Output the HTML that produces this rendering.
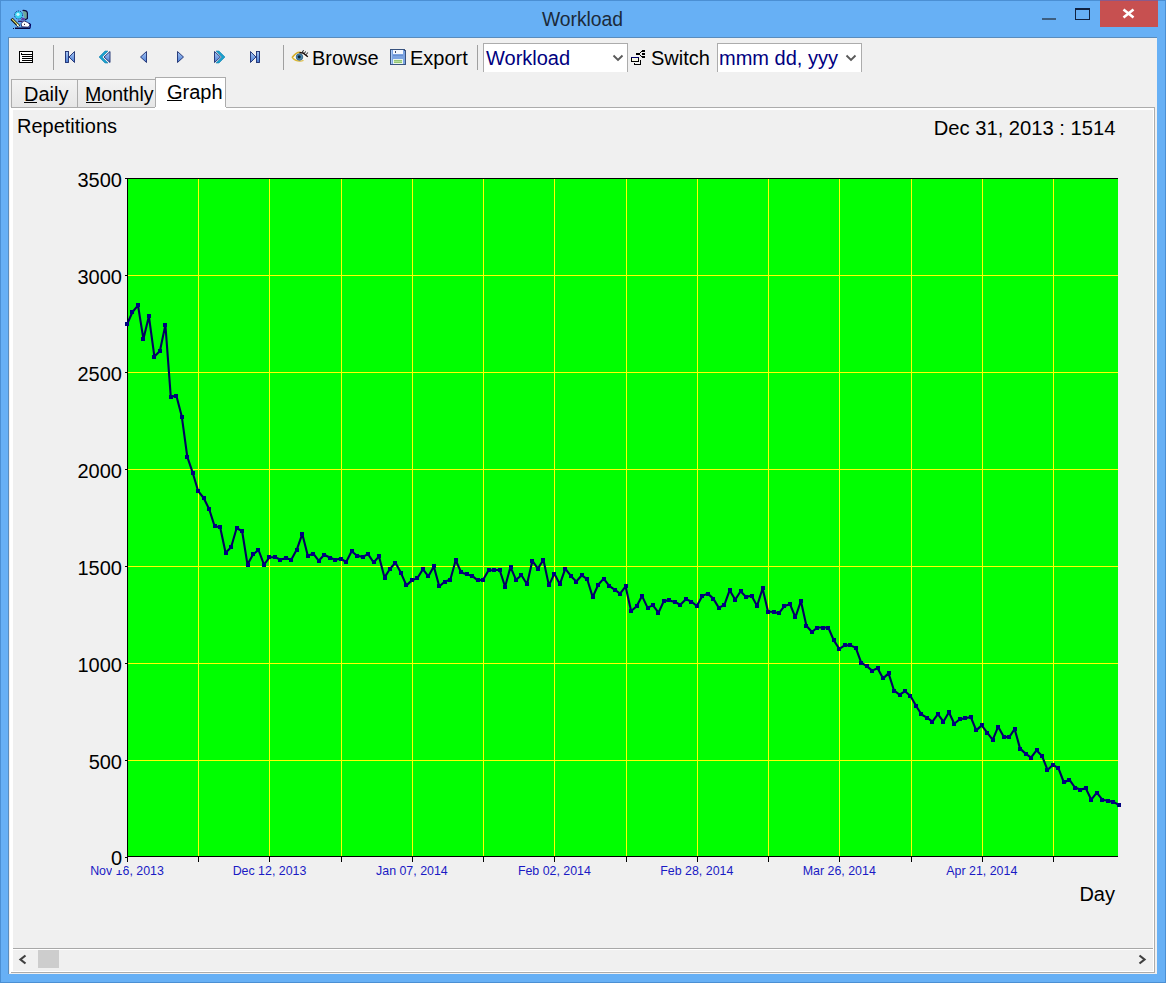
<!DOCTYPE html>
<html><head><meta charset="utf-8"><title>Workload</title>
<style>
html,body{margin:0;padding:0;width:1166px;height:983px;overflow:hidden;background:#67b0f5;}
svg{position:absolute;left:0;top:0;display:block;}
text{font-family:"Liberation Sans",sans-serif;}
</style></head><body>
<svg width="1166" height="983" viewBox="0 0 1166 983">
<!-- window frame -->
<rect x="0" y="0" width="1166" height="983" fill="#67b0f5"/>
<rect x="0.5" y="0.5" width="1165" height="982" fill="none" stroke="#4b8fd3" shape-rendering="crispEdges"/>
<!-- title -->
<text x="582.5" y="26" font-size="19.3" fill="#1b2a3a" text-anchor="middle">Workload</text>
<!-- app icon -->
<g>
  <circle cx="18.5" cy="15" r="4" fill="#38d0f0" stroke="#1a1a70" stroke-width="1" stroke-dasharray="1 1"/>
  <circle cx="18" cy="14.3" r="1.6" fill="#c8f8ff"/>
  <path d="M22.5 10.5 Q27 10.2 27.4 13 L27.4 18.5 L25 20" fill="#70a898" stroke="#0a0a40" stroke-width="1.2"/>
  <path d="M22 17.5 L25.5 18.5 L24 20.5 L21 20 Z" fill="#6040a0"/>
  <path d="M18 21.3 L22.5 21.3" stroke="#301060" stroke-width="1.2"/>
  <path d="M11.5 18.8 L19 26.3" stroke="#000000" stroke-width="3"/>
  <path d="M12 19 L18.5 25.5" stroke="#d8d870" stroke-width="1.3"/>
  <path d="M17 24.5 L18.8 26.4" stroke="#ffffff" stroke-width="1.3"/>
  <path d="M21 23.5 L24 20.8 L27.6 22.4 L30.5 24.5 L28.2 27.2 L21.8 26.8 Z" fill="#ffffff" stroke="#0a0a50" stroke-width="0.8"/>
  <rect x="24" y="23.8" width="1" height="1" fill="#000"/>
  <rect x="15" y="27.5" width="15" height="1.5" fill="#050540"/>
  <rect x="13" y="28" width="1" height="1" fill="#050540"/>
  <path d="M29 23.2 L30.5 24.5 L30 28.5" fill="none" stroke="#050560" stroke-width="1.2"/>
</g>
<!-- min / max / close -->
<rect x="1042" y="18" width="14" height="2" fill="#3d5e80" shape-rendering="crispEdges"/>
<rect x="1075.5" y="8.5" width="14" height="11" fill="none" stroke="#102240" shape-rendering="crispEdges"/>
<rect x="1075" y="8" width="15" height="2" fill="#102240" shape-rendering="crispEdges"/>
<rect x="1100" y="0" width="58" height="27" fill="#c75050" shape-rendering="crispEdges"/>
<rect x="1100" y="0" width="58" height="1" fill="#8a5a8a" shape-rendering="crispEdges"/>
<path d="M1123.5 9.5 L1133.5 17.5 M1133.5 9.5 L1123.5 17.5" stroke="#ffffff" stroke-width="2.6"/>

<!-- client area -->
<rect x="8" y="37" width="1149" height="937" fill="#f0f0f0" shape-rendering="crispEdges"/>
<rect x="8" y="37" width="1" height="937" fill="#5a8cbc" shape-rendering="crispEdges"/>
<rect x="8" y="37" width="1149" height="1" fill="#5a8cbc" shape-rendering="crispEdges"/>

<!-- toolbar -->
<g shape-rendering="crispEdges">
  <rect x="19" y="51" width="14" height="12" fill="#000"/>
  <rect x="20" y="52" width="12" height="10" fill="#fff"/>
  <rect x="22" y="54" width="10" height="1" fill="#000"/>
  <rect x="22" y="56" width="10" height="1" fill="#000"/>
  <rect x="22" y="58" width="10" height="1" fill="#000"/>
  <rect x="22" y="60" width="10" height="1" fill="#000"/>
  <rect x="21" y="53" width="1" height="2" fill="#000"/>
  <rect x="53" y="45" width="1" height="25" fill="#a0a0a0"/>
  <rect x="283" y="45" width="1" height="25" fill="#a0a0a0"/>
  <rect x="477" y="45" width="1" height="25" fill="#a0a0a0"/>
</g>
<defs>
  <linearGradient id="nb" x1="0" y1="0" x2="0" y2="1">
    <stop offset="0" stop-color="#a8c8f4"/><stop offset="1" stop-color="#4a7cd4"/>
  </linearGradient>
</defs>
<g stroke="#1a2c6e" stroke-width="0.9" fill="url(#nb)" stroke-linejoin="miter">
  <!-- |< -->
  <rect x="65.5" y="51.5" width="3" height="11"/>
  <path d="M74.5 51.5 L69 57 L74.5 62.5 Z"/>
  <!-- << -->
  <path d="M108 51 L105 51 L99 57 L105 63 L108 63 L102 57 Z" fill="#1aa0cc" stroke="#1482b0" stroke-width="0.6"/>
  <path d="M110 51.5 L104 57 L110 62.5 Z"/>
  <!-- < -->
  <path d="M146.5 51.5 L140.5 57 L146.5 62.5 Z"/>
  <!-- > -->
  <path d="M177.5 51.5 L183.5 57 L177.5 62.5 Z"/>
  <!-- >> -->
  <path d="M214.5 51.5 L220.5 57 L214.5 62.5 Z"/>
  <path d="M216 51 L219 51 L225 57 L219 63 L216 63 L222 57 Z" fill="#1aa0cc" stroke="#1482b0" stroke-width="0.6"/>
  <!-- >| -->
  <path d="M250.5 51.5 L256 57 L250.5 62.5 Z"/>
  <rect x="256.5" y="51.5" width="3" height="11"/>
</g>
<!-- eye icon -->
<g transform="translate(288,46)">
  <path d="M4 11.5 Q9 5.2 14 6.2 Q18 7 20 10.5 Q15 15.8 10 15.3 Q6 14.8 4 11.5 Z" fill="#fbfbf4"/>
  <path d="M4 11.8 Q8.5 5.6 12.5 6.3" fill="none" stroke="#d4ac28" stroke-width="1.7"/>
  <path d="M4.5 12 Q9 16.4 15.5 14.5" fill="none" stroke="#dcb830" stroke-width="1.3"/>
  <circle cx="11.5" cy="11" r="3.3" fill="#4a88b0" stroke="#2f5a80" stroke-width="0.8"/>
  <circle cx="11.2" cy="10.8" r="1.6" fill="#0c2430"/>
  <path d="M11.5 6.6 L15 7 L19.8 10.8" fill="none" stroke="#150808" stroke-width="1.4"/>
  <path d="M15.5 4.2 L14.2 6.5 M17.5 5.5 L16.4 7.5 M19.6 6.5 L18.4 8.6" stroke="#101010" stroke-width="1"/>
</g>
<text x="312" y="65" font-size="20" fill="#000">Browse</text>
<!-- floppy icon -->
<g transform="translate(390,49)" shape-rendering="crispEdges">
  <path d="M0.5 0.5 H14 L15.5 2 V15.5 H0.5 Z" fill="#7ca4e2" stroke="#38527e"/>
  <rect x="1" y="1" width="1" height="14" fill="#a8c8f4"/>
  <rect x="3" y="1" width="10" height="4" fill="#f4f8ff"/>
  <rect x="5" y="2" width="1" height="2" fill="#3c4660"/>
  <rect x="3" y="6" width="10" height="1" fill="#6890d0"/>
  <rect x="3" y="10" width="10" height="5" fill="#eaf6ea"/>
  <rect x="4" y="11" width="8" height="3" fill="#94c474"/>
  <rect x="4" y="12" width="8" height="1" fill="#b4dc9c"/>
</g>
<text x="410" y="65" font-size="20" fill="#000">Export</text>
<!-- combo 1 -->
<path d="M483.5 72 V43.5 H627.5 V72" fill="#ffffff" stroke="#acacac" shape-rendering="crispEdges"/>
<text x="486" y="65" font-size="20" fill="#000080">Workload</text>
<path d="M613.5 55.5 L618 60 L622.5 55.5" fill="none" stroke="#5a5a5a" stroke-width="1.9"/>
<!-- switch icon -->
<g shape-rendering="crispEdges">
  <rect x="631" y="57" width="8" height="5" fill="#000"/>
  <rect x="631" y="57" width="8" height="1" fill="#00006a"/>
  <rect x="632" y="58" width="6" height="3" fill="#f6f6e6"/>
  <rect x="634" y="63" width="1" height="2" fill="#000"/>
  <rect x="634" y="64" width="7" height="1" fill="#000"/>
  <rect x="640" y="60" width="1" height="5" fill="#000"/>
  <rect x="636" y="53" width="4" height="2" fill="#000"/>
  <rect x="642" y="50" width="3" height="2" fill="#000"/>
  <rect x="642" y="53" width="3" height="2" fill="#000"/>
  <rect x="642" y="56" width="3" height="2" fill="#000"/>
  <rect x="641" y="51" width="1" height="1" fill="#000"/>
  <rect x="640" y="52" width="1" height="1" fill="#000"/>
  <rect x="640" y="55" width="1" height="1" fill="#000"/>
  <rect x="641" y="56" width="1" height="1" fill="#000"/>
</g>
<text x="651" y="65" font-size="20" fill="#000">Switch</text>
<!-- combo 2 -->
<path d="M717.5 72 V43.5 H861.5 V72" fill="#ffffff" stroke="#acacac" shape-rendering="crispEdges"/>
<text x="719" y="65" font-size="20" fill="#000080">mmm dd, yyy</text>
<path d="M846.5 55.5 L851 60 L855.5 55.5" fill="none" stroke="#5a5a5a" stroke-width="1.9"/>
<!-- toolbar bottom clip -->
<rect x="9" y="72" width="1148" height="5" fill="#f0f0f0" shape-rendering="crispEdges"/>

<!-- tab panel -->
<g shape-rendering="crispEdges">
  <rect x="10" y="107" width="1145" height="866" fill="#ffffff"/>
  <rect x="10" y="107" width="1145" height="1" fill="#acacac"/>
  <rect x="1154" y="107" width="1" height="866" fill="#acacac"/>
  <rect x="10" y="972" width="1145" height="1" fill="#acacac"/>
  <rect x="10" y="107" width="1" height="866" fill="#ffffff"/>
  <rect x="13" y="110" width="1140" height="861" fill="#f0f0f0"/>
</g>
<!-- tabs -->
<defs>
  <linearGradient id="tg" x1="0" y1="0" x2="0" y2="1">
    <stop offset="0" stop-color="#f3f3f3"/><stop offset="1" stop-color="#e6e6e6"/>
  </linearGradient>
</defs>
<g shape-rendering="crispEdges">
  <rect x="11.5" y="79.5" width="66" height="28" fill="url(#tg)" stroke="#acacac"/>
  <rect x="77.5" y="79.5" width="78" height="28" fill="url(#tg)" stroke="#acacac"/>
  <rect x="155.5" y="77.5" width="70" height="30" fill="#ffffff" stroke="#acacac"/>
  <rect x="155" y="107" width="71" height="3" fill="#ffffff"/>
</g>
<text x="24" y="101" font-size="20" fill="#000">Daily</text>
<rect x="24" y="102" width="13" height="1" fill="#000"/>
<text x="85" y="101" font-size="19.6" fill="#000">Monthly</text>
<rect x="86" y="102" width="16" height="1" fill="#000"/>
<text x="167" y="99" font-size="20" fill="#000">Graph</text>
<rect x="167" y="100" width="15" height="1" fill="#000"/>

<!-- chart titles -->
<text x="17" y="133" font-size="20" fill="#000">Repetitions</text>
<text x="1115.5" y="135" font-size="20.2" fill="#000" text-anchor="end">Dec 31, 2013 : 1514</text>
<text x="1115" y="901" font-size="20" fill="#000" text-anchor="end">Day</text>

<!-- chart -->
<rect x="127" y="178" width="991" height="679" fill="#00ff00" shape-rendering="crispEdges"/>
<g stroke="#ffff00" stroke-width="1" shape-rendering="crispEdges"><line x1="198.5" y1="178" x2="198.5" y2="857"/><line x1="269.5" y1="178" x2="269.5" y2="857"/><line x1="341.5" y1="178" x2="341.5" y2="857"/><line x1="412.5" y1="178" x2="412.5" y2="857"/><line x1="483.5" y1="178" x2="483.5" y2="857"/><line x1="554.5" y1="178" x2="554.5" y2="857"/><line x1="626.5" y1="178" x2="626.5" y2="857"/><line x1="697.5" y1="178" x2="697.5" y2="857"/><line x1="768.5" y1="178" x2="768.5" y2="857"/><line x1="839.5" y1="178" x2="839.5" y2="857"/><line x1="911.5" y1="178" x2="911.5" y2="857"/><line x1="982.5" y1="178" x2="982.5" y2="857"/><line x1="1053.5" y1="178" x2="1053.5" y2="857"/><line x1="127" y1="760.5" x2="1118" y2="760.5"/><line x1="127" y1="663.5" x2="1118" y2="663.5"/><line x1="127" y1="566.5" x2="1118" y2="566.5"/><line x1="127" y1="469.5" x2="1118" y2="469.5"/><line x1="127" y1="372.5" x2="1118" y2="372.5"/><line x1="127" y1="275.5" x2="1118" y2="275.5"/></g>
<g stroke="#000000" stroke-width="1" shape-rendering="crispEdges">
  <line x1="127.5" y1="178" x2="127.5" y2="858"/>
  <line x1="127" y1="178.5" x2="1118" y2="178.5"/>
  <line x1="127" y1="856.5" x2="1118" y2="856.5"/>
  <line x1="127.5" y1="857" x2="127.5" y2="862"/><line x1="198.5" y1="857" x2="198.5" y2="862"/><line x1="269.5" y1="857" x2="269.5" y2="862"/><line x1="341.5" y1="857" x2="341.5" y2="862"/><line x1="412.5" y1="857" x2="412.5" y2="862"/><line x1="483.5" y1="857" x2="483.5" y2="862"/><line x1="554.5" y1="857" x2="554.5" y2="862"/><line x1="626.5" y1="857" x2="626.5" y2="862"/><line x1="697.5" y1="857" x2="697.5" y2="862"/><line x1="768.5" y1="857" x2="768.5" y2="862"/><line x1="839.5" y1="857" x2="839.5" y2="862"/><line x1="911.5" y1="857" x2="911.5" y2="862"/><line x1="982.5" y1="857" x2="982.5" y2="862"/><line x1="1053.5" y1="857" x2="1053.5" y2="862"/><line x1="125" y1="857.5" x2="127" y2="857.5"/><line x1="125" y1="760.5" x2="127" y2="760.5"/><line x1="125" y1="663.5" x2="127" y2="663.5"/><line x1="125" y1="566.5" x2="127" y2="566.5"/><line x1="125" y1="469.5" x2="127" y2="469.5"/><line x1="125" y1="372.5" x2="127" y2="372.5"/><line x1="125" y1="275.5" x2="127" y2="275.5"/><line x1="125" y1="178.5" x2="127" y2="178.5"/>
</g>
<g font-size="12.4" fill="#1a1ac4" text-anchor="middle"><text x="127.0" y="875">Nov 16, 2013</text><text x="269.5" y="875">Dec 12, 2013</text><text x="411.9" y="875">Jan 07, 2014</text><text x="554.4" y="875">Feb 02, 2014</text><text x="696.8" y="875">Feb 28, 2014</text><text x="839.3" y="875">Mar 26, 2014</text><text x="981.8" y="875">Apr 21, 2014</text></g>
<rect x="112" y="848" width="12" height="22" fill="#f0f0f0"/>
<g font-size="20" fill="#000" text-anchor="end"><text x="122" y="865">0</text><text x="122" y="769">500</text><text x="122" y="672">1000</text><text x="122" y="575">1500</text><text x="122" y="478">2000</text><text x="122" y="381">2500</text><text x="122" y="284">3000</text><text x="122" y="187">3500</text></g>
<polyline points="127.0,324.3 132.5,312.0 138.0,305.4 143.4,338.9 148.9,316.3 154.4,356.6 159.9,351.0 165.4,324.9 170.8,397.0 176.3,395.5 181.8,416.6 187.3,456.8 192.7,472.7 198.2,491.2 203.7,498.0 209.2,509.2 214.7,526.5 220.1,527.0 225.6,552.8 231.1,547.2 236.6,528.2 242.1,531.0 247.5,564.6 253.0,554.5 258.5,550.0 264.0,564.6 269.5,557.3 274.9,557.3 280.4,559.5 285.9,558.4 291.4,559.5 296.8,549.6 302.3,533.9 307.8,555.8 313.3,553.6 318.8,560.8 324.2,554.7 329.7,557.5 335.2,559.7 340.7,558.6 346.2,562.0 351.6,551.3 357.1,555.8 362.6,556.9 368.1,554.1 373.6,562.5 379.0,556.4 384.5,577.6 390.0,568.7 395.5,562.8 400.9,572.8 406.4,585.4 411.9,580.4 417.4,578.1 422.9,569.2 428.3,576.4 433.8,566.4 439.3,586.5 444.8,581.5 450.3,579.8 455.7,560.2 461.2,572.5 466.7,574.2 472.2,575.9 477.7,580.4 483.1,579.8 488.6,570.3 494.1,570.3 499.6,569.7 505.1,586.7 510.5,566.9 516.0,579.8 521.5,575.3 527.0,584.3 532.4,560.8 537.9,568.6 543.4,559.7 548.9,585.4 554.4,573.6 559.8,584.3 565.3,568.6 570.8,575.9 576.3,581.5 581.8,575.3 587.2,579.2 592.7,597.1 598.2,584.7 603.7,578.6 609.2,585.8 614.6,589.7 620.1,593.6 625.6,586.4 631.1,611.0 636.5,606.5 642.0,595.9 647.5,607.6 653.0,605.4 658.5,612.7 663.9,600.9 669.4,600.4 674.9,602.0 680.4,604.8 685.9,599.2 691.3,601.5 696.8,606.0 702.3,595.9 707.8,593.6 713.3,598.6 718.7,607.6 724.2,605.3 729.7,590.2 735.2,599.7 740.6,591.3 746.1,596.9 751.6,595.8 757.1,605.9 762.6,588.5 768.0,611.5 773.5,612.0 779.0,613.2 784.5,605.9 790.0,604.2 795.4,617.3 800.9,601.0 806.4,625.8 811.9,632.0 817.4,627.5 822.8,627.5 828.3,627.5 833.8,640.4 839.3,648.8 844.7,645.4 850.2,645.4 855.7,647.6 861.2,662.7 866.7,666.1 872.1,670.6 877.6,668.3 883.1,678.4 888.6,673.4 894.1,690.7 899.5,694.6 905.0,691.3 910.5,696.0 916.0,705.8 921.5,714.5 926.9,717.6 932.4,721.7 937.9,714.2 943.4,721.7 948.9,712.3 954.3,723.7 959.8,719.2 965.3,718.3 970.8,717.0 976.2,730.4 981.7,725.4 987.2,732.7 992.7,739.9 998.2,726.7 1003.6,736.6 1009.1,737.4 1014.6,729.0 1020.1,748.6 1025.6,753.6 1031.0,757.6 1036.5,750.3 1042.0,755.9 1047.5,769.9 1053.0,764.8 1058.4,768.2 1063.9,782.5 1069.4,779.7 1074.9,787.5 1080.3,789.6 1085.8,788.4 1091.3,799.7 1096.8,792.6 1102.3,799.7 1107.7,800.7 1113.2,801.9 1118.7,804.7" fill="none" stroke="#000060" stroke-width="2.1" stroke-linejoin="round"/>
<g fill="#000080" shape-rendering="crispEdges"><rect x="125" y="322" width="4" height="4"/><rect x="130" y="310" width="4" height="4"/><rect x="136" y="303" width="4" height="4"/><rect x="141" y="337" width="4" height="4"/><rect x="147" y="314" width="4" height="4"/><rect x="152" y="355" width="4" height="4"/><rect x="158" y="349" width="4" height="4"/><rect x="163" y="323" width="4" height="4"/><rect x="169" y="395" width="4" height="4"/><rect x="174" y="394" width="4" height="4"/><rect x="180" y="415" width="4" height="4"/><rect x="185" y="455" width="4" height="4"/><rect x="191" y="471" width="4" height="4"/><rect x="196" y="489" width="4" height="4"/><rect x="202" y="496" width="4" height="4"/><rect x="207" y="507" width="4" height="4"/><rect x="213" y="524" width="4" height="4"/><rect x="218" y="525" width="4" height="4"/><rect x="224" y="551" width="4" height="4"/><rect x="229" y="545" width="4" height="4"/><rect x="235" y="526" width="4" height="4"/><rect x="240" y="529" width="4" height="4"/><rect x="246" y="563" width="4" height="4"/><rect x="251" y="552" width="4" height="4"/><rect x="256" y="548" width="4" height="4"/><rect x="262" y="563" width="4" height="4"/><rect x="267" y="555" width="4" height="4"/><rect x="273" y="555" width="4" height="4"/><rect x="278" y="558" width="4" height="4"/><rect x="284" y="556" width="4" height="4"/><rect x="289" y="558" width="4" height="4"/><rect x="295" y="548" width="4" height="4"/><rect x="300" y="532" width="4" height="4"/><rect x="306" y="554" width="4" height="4"/><rect x="311" y="552" width="4" height="4"/><rect x="317" y="559" width="4" height="4"/><rect x="322" y="553" width="4" height="4"/><rect x="328" y="556" width="4" height="4"/><rect x="333" y="558" width="4" height="4"/><rect x="339" y="557" width="4" height="4"/><rect x="344" y="560" width="4" height="4"/><rect x="350" y="549" width="4" height="4"/><rect x="355" y="554" width="4" height="4"/><rect x="361" y="555" width="4" height="4"/><rect x="366" y="552" width="4" height="4"/><rect x="372" y="560" width="4" height="4"/><rect x="377" y="554" width="4" height="4"/><rect x="383" y="576" width="4" height="4"/><rect x="388" y="567" width="4" height="4"/><rect x="393" y="561" width="4" height="4"/><rect x="399" y="571" width="4" height="4"/><rect x="404" y="583" width="4" height="4"/><rect x="410" y="578" width="4" height="4"/><rect x="415" y="576" width="4" height="4"/><rect x="421" y="567" width="4" height="4"/><rect x="426" y="574" width="4" height="4"/><rect x="432" y="564" width="4" height="4"/><rect x="437" y="584" width="4" height="4"/><rect x="443" y="580" width="4" height="4"/><rect x="448" y="578" width="4" height="4"/><rect x="454" y="558" width="4" height="4"/><rect x="459" y="570" width="4" height="4"/><rect x="465" y="572" width="4" height="4"/><rect x="470" y="574" width="4" height="4"/><rect x="476" y="578" width="4" height="4"/><rect x="481" y="578" width="4" height="4"/><rect x="487" y="568" width="4" height="4"/><rect x="492" y="568" width="4" height="4"/><rect x="498" y="568" width="4" height="4"/><rect x="503" y="585" width="4" height="4"/><rect x="509" y="565" width="4" height="4"/><rect x="514" y="578" width="4" height="4"/><rect x="519" y="573" width="4" height="4"/><rect x="525" y="582" width="4" height="4"/><rect x="530" y="559" width="4" height="4"/><rect x="536" y="567" width="4" height="4"/><rect x="541" y="558" width="4" height="4"/><rect x="547" y="583" width="4" height="4"/><rect x="552" y="572" width="4" height="4"/><rect x="558" y="582" width="4" height="4"/><rect x="563" y="567" width="4" height="4"/><rect x="569" y="574" width="4" height="4"/><rect x="574" y="580" width="4" height="4"/><rect x="580" y="573" width="4" height="4"/><rect x="585" y="577" width="4" height="4"/><rect x="591" y="595" width="4" height="4"/><rect x="596" y="583" width="4" height="4"/><rect x="602" y="577" width="4" height="4"/><rect x="607" y="584" width="4" height="4"/><rect x="613" y="588" width="4" height="4"/><rect x="618" y="592" width="4" height="4"/><rect x="624" y="584" width="4" height="4"/><rect x="629" y="609" width="4" height="4"/><rect x="635" y="604" width="4" height="4"/><rect x="640" y="594" width="4" height="4"/><rect x="646" y="606" width="4" height="4"/><rect x="651" y="603" width="4" height="4"/><rect x="656" y="611" width="4" height="4"/><rect x="662" y="599" width="4" height="4"/><rect x="667" y="598" width="4" height="4"/><rect x="673" y="600" width="4" height="4"/><rect x="678" y="603" width="4" height="4"/><rect x="684" y="597" width="4" height="4"/><rect x="689" y="600" width="4" height="4"/><rect x="695" y="604" width="4" height="4"/><rect x="700" y="594" width="4" height="4"/><rect x="706" y="592" width="4" height="4"/><rect x="711" y="597" width="4" height="4"/><rect x="717" y="606" width="4" height="4"/><rect x="722" y="603" width="4" height="4"/><rect x="728" y="588" width="4" height="4"/><rect x="733" y="598" width="4" height="4"/><rect x="739" y="589" width="4" height="4"/><rect x="744" y="595" width="4" height="4"/><rect x="750" y="594" width="4" height="4"/><rect x="755" y="604" width="4" height="4"/><rect x="761" y="586" width="4" height="4"/><rect x="766" y="610" width="4" height="4"/><rect x="772" y="610" width="4" height="4"/><rect x="777" y="611" width="4" height="4"/><rect x="782" y="604" width="4" height="4"/><rect x="788" y="602" width="4" height="4"/><rect x="793" y="615" width="4" height="4"/><rect x="799" y="599" width="4" height="4"/><rect x="804" y="624" width="4" height="4"/><rect x="810" y="630" width="4" height="4"/><rect x="815" y="626" width="4" height="4"/><rect x="821" y="626" width="4" height="4"/><rect x="826" y="626" width="4" height="4"/><rect x="832" y="638" width="4" height="4"/><rect x="837" y="647" width="4" height="4"/><rect x="843" y="643" width="4" height="4"/><rect x="848" y="643" width="4" height="4"/><rect x="854" y="646" width="4" height="4"/><rect x="859" y="661" width="4" height="4"/><rect x="865" y="664" width="4" height="4"/><rect x="870" y="669" width="4" height="4"/><rect x="876" y="666" width="4" height="4"/><rect x="881" y="676" width="4" height="4"/><rect x="887" y="671" width="4" height="4"/><rect x="892" y="689" width="4" height="4"/><rect x="898" y="693" width="4" height="4"/><rect x="903" y="689" width="4" height="4"/><rect x="908" y="694" width="4" height="4"/><rect x="914" y="704" width="4" height="4"/><rect x="919" y="712" width="4" height="4"/><rect x="925" y="716" width="4" height="4"/><rect x="930" y="720" width="4" height="4"/><rect x="936" y="712" width="4" height="4"/><rect x="941" y="720" width="4" height="4"/><rect x="947" y="710" width="4" height="4"/><rect x="952" y="722" width="4" height="4"/><rect x="958" y="717" width="4" height="4"/><rect x="963" y="716" width="4" height="4"/><rect x="969" y="715" width="4" height="4"/><rect x="974" y="728" width="4" height="4"/><rect x="980" y="723" width="4" height="4"/><rect x="985" y="731" width="4" height="4"/><rect x="991" y="738" width="4" height="4"/><rect x="996" y="725" width="4" height="4"/><rect x="1002" y="735" width="4" height="4"/><rect x="1007" y="735" width="4" height="4"/><rect x="1013" y="727" width="4" height="4"/><rect x="1018" y="747" width="4" height="4"/><rect x="1024" y="752" width="4" height="4"/><rect x="1029" y="756" width="4" height="4"/><rect x="1035" y="748" width="4" height="4"/><rect x="1040" y="754" width="4" height="4"/><rect x="1045" y="768" width="4" height="4"/><rect x="1051" y="763" width="4" height="4"/><rect x="1056" y="766" width="4" height="4"/><rect x="1062" y="780" width="4" height="4"/><rect x="1067" y="778" width="4" height="4"/><rect x="1073" y="786" width="4" height="4"/><rect x="1078" y="788" width="4" height="4"/><rect x="1084" y="786" width="4" height="4"/><rect x="1089" y="798" width="4" height="4"/><rect x="1095" y="791" width="4" height="4"/><rect x="1100" y="798" width="4" height="4"/><rect x="1106" y="799" width="4" height="4"/><rect x="1111" y="800" width="4" height="4"/><rect x="1117" y="803" width="4" height="4"/></g>

<!-- scrollbar -->
<g shape-rendering="crispEdges">
  <rect x="13" y="948" width="1140" height="1" fill="#a8a8a8"/>
  <rect x="13" y="949" width="1140" height="1" fill="#ffffff"/>
  <rect x="13" y="950" width="1140" height="21" fill="#f0f0f0"/>
  <rect x="38" y="950" width="21" height="18" fill="#cdcdcd"/>
</g>
<path d="M25.5 955.5 L20.5 959.5 L25.5 963.5" fill="none" stroke="#404040" stroke-width="2.2"/>
<path d="M1139.5 955.5 L1144.5 959.5 L1139.5 963.5" fill="none" stroke="#404040" stroke-width="2.2"/>
</svg>
</body></html>
